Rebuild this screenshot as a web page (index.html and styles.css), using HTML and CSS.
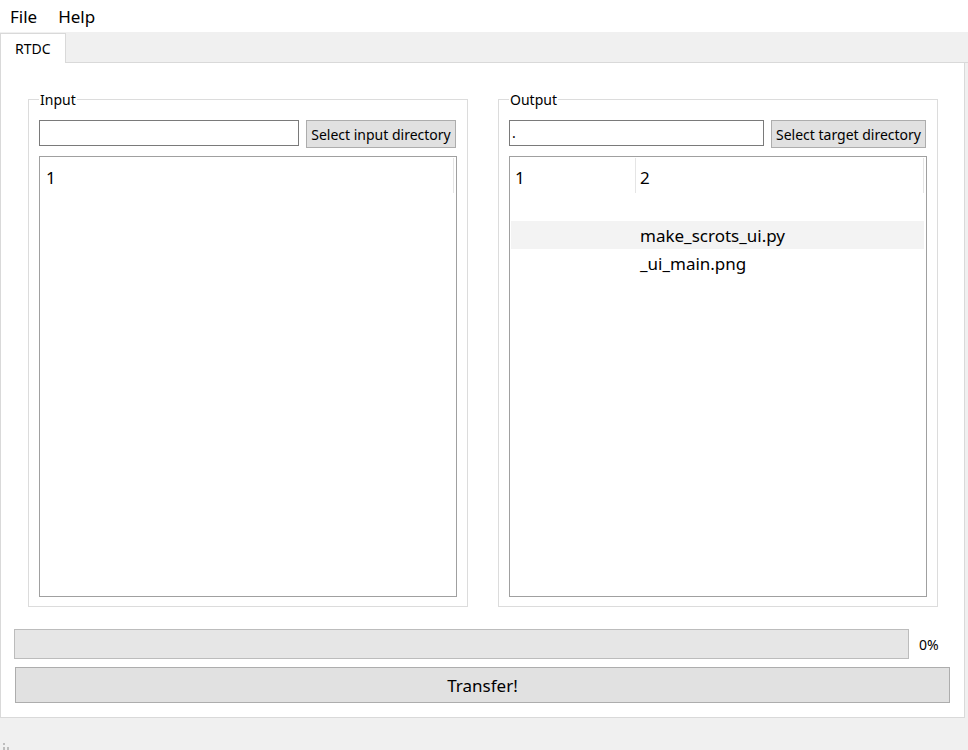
FILE: index.html
```html
<!DOCTYPE html>
<html>
<head>
<meta charset="utf-8">
<link rel="stylesheet" href="styles.css">
</head>
<body>
<div class="window">
  <div class="menubar">
    <span class="menu-item">File</span>
    <span class="menu-item">Help</span>
  </div>
  <div class="tabbar">
    <div class="tab">RTDC</div>
  </div>
  <div class="pane">
    <div class="groups">
      <div class="group">
        <span class="group-title">Input</span>
        <div class="row">
          <div class="lineedit"></div>
          <button class="btn btn-in">Select input directory</button>
        </div>
        <div class="list">
          <div class="header">
            <div class="hcell hcell-full">1</div>
          </div>
        </div>
      </div>
      <div class="group">
        <span class="group-title">Output</span>
        <div class="row">
          <div class="lineedit">.</div>
          <button class="btn btn-out">Select target directory</button>
        </div>
        <div class="list">
          <div class="header">
            <div class="hcell hcell-c1">1</div>
            <div class="hcell hcell-c2">2</div>
          </div>
          <div class="trow"><span class="tcell-c1"></span><span class="tcell-c2"></span></div>
          <div class="trow trow-hover"><span class="tcell-c1"></span><span class="tcell-c2">make_scrots_ui.py</span></div>
          <div class="trow"><span class="tcell-c1"></span><span class="tcell-c2">_ui_main.png</span></div>
        </div>
      </div>
    </div>
    <div class="progress-row">
      <div class="progress"></div>
      <span class="pct">0%</span>
    </div>
    <button class="transfer">Transfer!</button>
  </div>
  <div class="statusbar">
    <svg class="grip" width="10" height="8" viewBox="0 0 10 8">
      <rect x="3" y="1" width="2" height="2" fill="#bdbdbd"/>
      <rect x="3" y="5" width="2" height="3" fill="#bdbdbd"/>
      <rect x="7" y="5" width="2" height="3" fill="#bdbdbd"/>
    </svg>
  </div>
</div>
</body>
</html>
```

FILE: styles.css
```css
* { box-sizing: border-box; }
html, body { margin: 0; padding: 0; }
body {
  background: #f0f0f0;
  font-family: "Noto Sans", "Open Sans", sans-serif;
  color: #000;
  width: 968px;
  height: 750px;
  overflow: hidden;
}
.window { display: flex; flex-direction: column; width: 968px; height: 750px; }

.menubar {
  height: 32px;
  background: #fff;
  display: flex;
  align-items: center;
  padding-left: 10px;
  padding-top: 2px;
  gap: 21px;
  font-size: 17px;
}
.menu-item { line-height: 22px; }

.tabbar {
  height: 31px;
  display: flex;
  align-items: flex-end;
  border-bottom: 1px solid #d9d9d9;
}
.tab {
  width: 66px;
  height: 30px;
  margin-bottom: -1px;
  background: #fff;
  border: 1px solid #d9d9d9;
  border-bottom: none;
  font-size: 14px;
  padding-left: 14px;
  padding-top: 5px;
  position: relative;
  z-index: 1;
}

.pane {
  width: 965px;
  height: 655px;
  background: #fff;
  border: 1px solid #d9d9d9;
  border-top: none;
  padding: 36px 13px 14px 13px;
  display: flex;
  flex-direction: column;
}

.groups {
  display: flex;
  gap: 30px;
  padding: 0 13px 0 14px;
  height: 508px;
}
.group {
  width: 440px;
  height: 508px;
  border: 1px solid #dcdcdc;
  padding: 0 10px 9px 10px;
  display: flex;
  flex-direction: column;
}
.group-title {
  align-self: flex-start;
  margin-top: -10px;
  background: #fff;
  padding: 0 1px;
  font-size: 14px;
  line-height: 19px;
}
.row {
  display: flex;
  align-items: flex-start;
  gap: 7px;
  margin-top: 11px;
  height: 28px;
}
.lineedit {
  flex: 1;
  height: 26px;
  border: 1px solid #7a7a7a;
  background: #fff;
  font-size: 14px;
  line-height: 24px;
  padding-left: 2px;
}
.btn {
  height: 28px;
  background: #e1e1e1;
  border: 1px solid #adadad;
  font-family: inherit;
  font-size: 14px;
  color: #000;
  padding: 0;
  margin: 0 1px 0 0;
  border-radius: 0;
  white-space: nowrap;
}
.btn-in { width: 150px; }
.btn-out { width: 155px; }

.list {
  flex: 1;
  margin-top: 8px;
  border: 1px solid #a0a0a0;
  background: #fff;
  font-size: 17px;
}
.header {
  display: flex;
  height: 36px;
}
.hcell {
  height: 35px;
  margin-top: 1px;
  border-right: 1px solid #e5e5e5;
  line-height: 40px;
}
.hcell-full { width: 414px; padding-left: 6px; }
.hcell-c1 { width: 126px; padding-left: 5px; }
.hcell-c2 { width: 288px; padding-left: 4px; }

.trow {
  display: flex;
  height: 28px;
  margin: 0 1px;
  width: 413px;
  line-height: 30px;
}
.trow-hover { background: #f3f3f3; }
.tcell-c1 { width: 125px; }
.tcell-c2 { padding-left: 4px; }

.progress-row {
  display: flex;
  align-items: center;
  margin-top: 22px;
  height: 30px;
}
.progress {
  flex: 1;
  height: 30px;
  background: #e6e6e6;
  border: 1px solid #bcbcbc;
}
.pct {
  width: 32px;
  margin-left: 10px;
  font-size: 14px;
}
.transfer {
  margin: 8px 0 0 1px;
  height: 36px;
  width: 935px;
  background: #e1e1e1;
  border: 1px solid #adadad;
  border-radius: 0;
  font-family: inherit;
  font-size: 17px;
  color: #000;
  padding: 0;
}

.statusbar {
  flex: 1;
  display: flex;
  align-items: flex-end;
}
.grip { display: block; }
```
